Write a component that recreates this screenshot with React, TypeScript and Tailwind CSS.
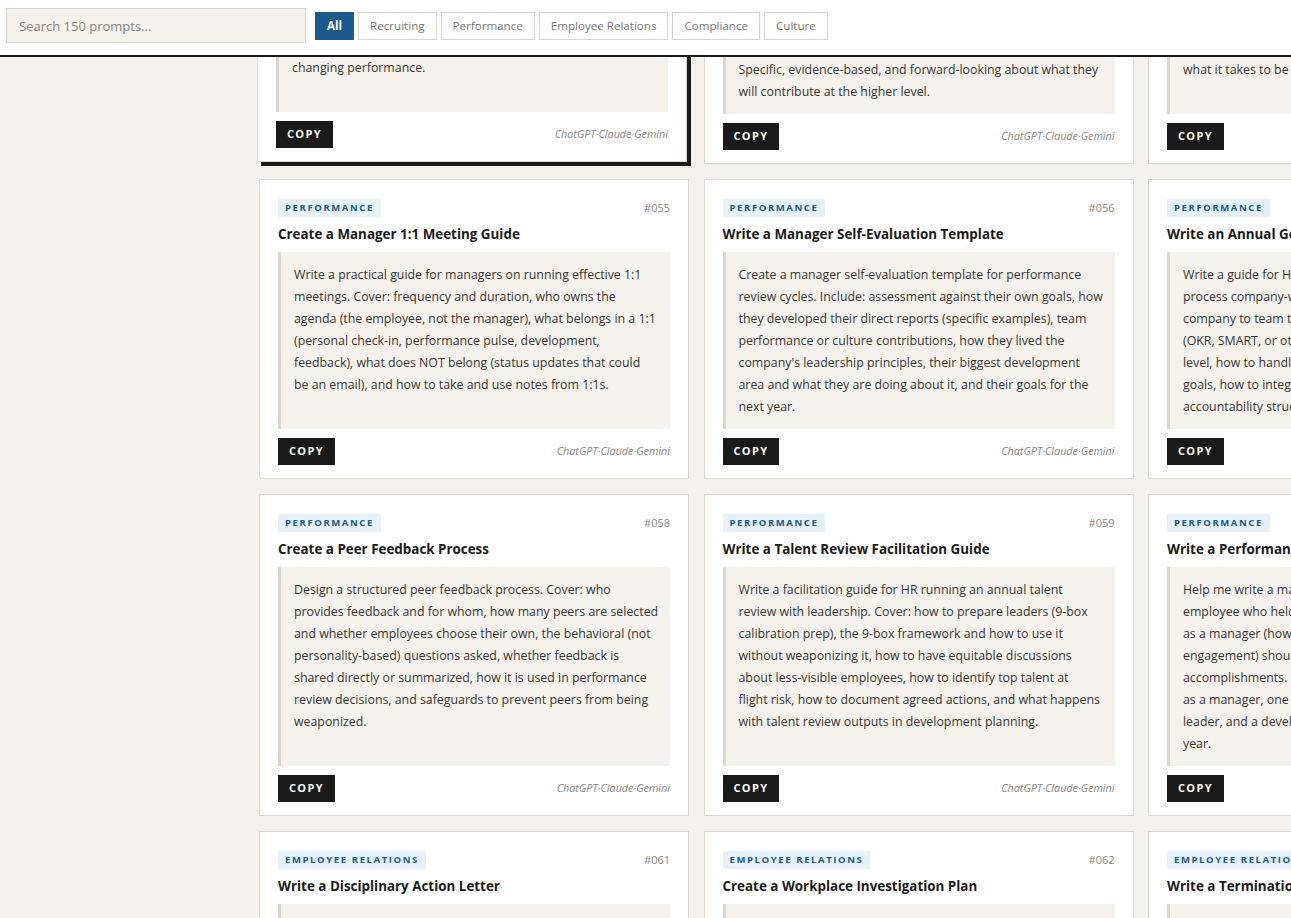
import React from "react";

interface Prompt {
  id: string;
  category: string;
  title: string;
  lines: string[];
}

const filters = ["All", "Recruiting", "Performance", "Employee Relations", "Compliance", "Culture"];

const prompts: Prompt[] = [
  {
    id: "052",
    category: "Performance",
    title: "Write a Performance Improvement Plan",
    lines: [
      "Draft a 60-day performance improvement plan for an",
      "employee who is missing expectations. Include: the",
      "specific gaps with examples, measurable goals, the",
      "support the company will provide, the check-in cadence,",
      "and what happens at the end. Direct, but clearly aimed at",
      "changing performance.",
    ],
  },
  {
    id: "053",
    category: "Performance",
    title: "Write a Promotion Case",
    lines: [
      "Help me write a promotion case for a team member moving",
      "to the next level. Include: the scope they already operate",
      "at, three concrete examples of impact, how peers and",
      "stakeholders describe working with them, where they",
      "still need support, and why now is the right time.",
      "Specific, evidence-based, and forward-looking about what they",
      "will contribute at the higher level.",
    ],
  },
  {
    id: "054",
    category: "Performance",
    title: "Create a Career Ladder Framework",
    lines: [
      "Build a career ladder for an individual contributor track.",
      "Include: four levels with clear titles, the expected scope",
      "and impact at each level, the core skills that change",
      "between levels, sample behaviors, and how managers",
      "should use it in growth conversations so people know",
      "what it takes to be  promoted.",
    ],
  },
  {
    id: "055",
    category: "Performance",
    title: "Create a Manager 1:1 Meeting Guide",
    lines: [
      "Write a practical guide for managers on running effective 1:1",
      "meetings. Cover: frequency and duration, who owns the",
      "agenda (the employee, not the manager), what belongs in a 1:1",
      "(personal check-in, performance pulse, development,",
      "feedback), what does NOT belong (status updates that could",
      "be an email), and how to take and use notes from 1:1s.",
    ],
  },
  {
    id: "056",
    category: "Performance",
    title: "Write a Manager Self-Evaluation Template",
    lines: [
      "Create a manager self-evaluation template for performance",
      "review cycles. Include: assessment against their own goals, how",
      "they developed their direct reports (specific examples), team",
      "performance or culture contributions, how they lived the",
      "company's leadership principles, their biggest development",
      "area and what they are doing about it, and their goals for the",
      "next year.",
    ],
  },
  {
    id: "057",
    category: "Performance",
    title: "Write an Annual Goal-Setting Guide",
    lines: [
      "Write a guide for HR on running the annual goal-setting",
      "process company-wide. Cover: how goals cascade from the",
      "company to team to individual, the recommended format",
      "(OKR, SMART, or other), how many goals are right at each",
      "level, how to handle mid-year changes and missed",
      "goals, how to integrate goals into reviews, and the",
      "accountability structure for tracking progress.",
    ],
  },
  {
    id: "058",
    category: "Performance",
    title: "Create a Peer Feedback Process",
    lines: [
      "Design a structured peer feedback process. Cover: who",
      "provides feedback and for whom, how many peers are selected",
      "and whether employees choose their own, the behavioral (not",
      "personality-based) questions asked, whether feedback is",
      "shared directly or summarized, how it is used in performance",
      "review decisions, and safeguards to prevent peers from being",
      "weaponized.",
    ],
  },
  {
    id: "059",
    category: "Performance",
    title: "Write a Talent Review Facilitation Guide",
    lines: [
      "Write a facilitation guide for HR running an annual talent",
      "review with leadership. Cover: how to prepare leaders (9-box",
      "calibration prep), the 9-box framework and how to use it",
      "without weaponizing it, how to have equitable discussions",
      "about less-visible employees, how to identify top talent at",
      "flight risk, how to document agreed actions, and what happens",
      "with talent review outputs in development planning.",
    ],
  },
  {
    id: "060",
    category: "Performance",
    title: "Write a Performance Review for a Manager",
    lines: [
      "Help me write a manager performance review for an",
      "employee who held a people-leader role. Their results",
      "as a manager (how their team performed, retention,",
      "engagement) should be weighed alongside their own",
      "accomplishments. Include: their strongest contribution",
      "as a manager, one area where they can grow as a",
      "leader, and a development goal for the rest of the",
      "year.",
    ],
  },
  {
    id: "061",
    category: "Employee Relations",
    title: "Write a Disciplinary Action Letter",
    lines: [
      "Draft a written warning for an employee with repeated",
      "attendance issues. Include: the policy, the specific dates,",
      "prior conversations, and the consequences of no change.",
    ],
  },
  {
    id: "062",
    category: "Employee Relations",
    title: "Create a Workplace Investigation Plan",
    lines: [
      "Create an investigation plan for a harassment complaint.",
      "Cover: who to interview and in what order, how to keep",
      "it confidential, and how to document findings.",
    ],
  },
  {
    id: "063",
    category: "Employee Relations",
    title: "Write a Termination Meeting Script",
    lines: [
      "Write a script for a manager and HR partner delivering a",
      "termination. Cover: the opening, the decision, logistics,",
      "and how to respond if the employee becomes upset.",
    ],
  },
];

const PromptCard: React.FC<{ prompt: Prompt; active?: boolean }> = ({ prompt, active }) => (
  <div
    className={`flex flex-col bg-white border border-[#ddd8cf] px-[18px] pt-[19px] pb-[13px] ${
      active ? "-translate-x-[2px] -translate-y-[2px] shadow-[4px_4px_0_#1a1a1a]" : ""
    }`}
  >
    <div className="flex items-center justify-between h-[18px] mb-[7px]">
      <span className="h-[18px] px-[7px] flex items-center bg-[#e6f0f9] text-[#1b5a8c] text-[9.5px] font-bold uppercase tracking-[0.17em]">
        {prompt.category}
      </span>
      <span className="text-[11px] text-[#888]">#{prompt.id}</span>
    </div>
    <h3 className="text-[13.4px] font-bold leading-[20px] text-[#1a1a1a] mb-2 whitespace-nowrap">
      {prompt.title}
    </h3>
    <div className="flex-1 bg-[#f5f2ed] border-l-[3px] border-[#dcd7cd] pl-[13px] pr-[8px] pt-[12px] pb-[11px]">
      <p className="text-[12.35px] leading-[22px] text-[#363636] whitespace-nowrap">
        {prompt.lines.map((line, i) => (
          <React.Fragment key={i}>
            {line}
            {i < prompt.lines.length - 1 && <br />}
          </React.Fragment>
        ))}
      </p>
    </div>
    <div className="flex items-center justify-between mt-[9px]">
      <button className="h-[27px] px-[11px] bg-[#1a1a1a] text-white text-[11px] font-bold tracking-[0.12em]">
        COPY
      </button>
      <span className="text-[10.8px] italic text-[#888]">ChatGPT·Claude·Gemini</span>
    </div>
  </div>
);

export default function App() {
  return (
    <div className="h-screen overflow-hidden bg-[#f5f2ed] font-['Open_Sans',sans-serif]">
      {/* Filter bar */}
      <div className="h-[57px] bg-white border-b-2 border-[#1a1a1a] flex items-start pt-2 pl-[6px]">
        <div className="flex items-center h-[35px] gap-[9px]">
          <input
            className="w-[300px] h-[35px] bg-[#f5f2ed] border border-[#d8d3ca] px-3 text-[13px] text-[#333] placeholder:text-[#8a8580] outline-none"
            placeholder="Search 150 prompts..."
          />
          <div className="flex items-center gap-[4px]">
            {filters.map((f, i) => (
              <button
                key={f}
                className={`h-[28px] px-[11px] text-[11.6px] border ${
                  i === 0
                    ? "bg-[#1b5a8c] border-[#1b5a8c] text-white font-bold"
                    : "bg-white border-[#d9d5cc] text-[#777]"
                }`}
              >
                {f}
              </button>
            ))}
          </div>
        </div>
      </div>

      {/* Prompt grid */}
      <div className="h-[861px] overflow-hidden">
        <div className="-mt-[193px] pl-[259px] grid grid-cols-[430px_430px_430px] gap-x-[14.5px] gap-y-[15px]">
          {prompts.map((p, i) => (
            <PromptCard key={p.id} prompt={p} active={i === 0} />
          ))}
        </div>
      </div>
    </div>
  );
}
